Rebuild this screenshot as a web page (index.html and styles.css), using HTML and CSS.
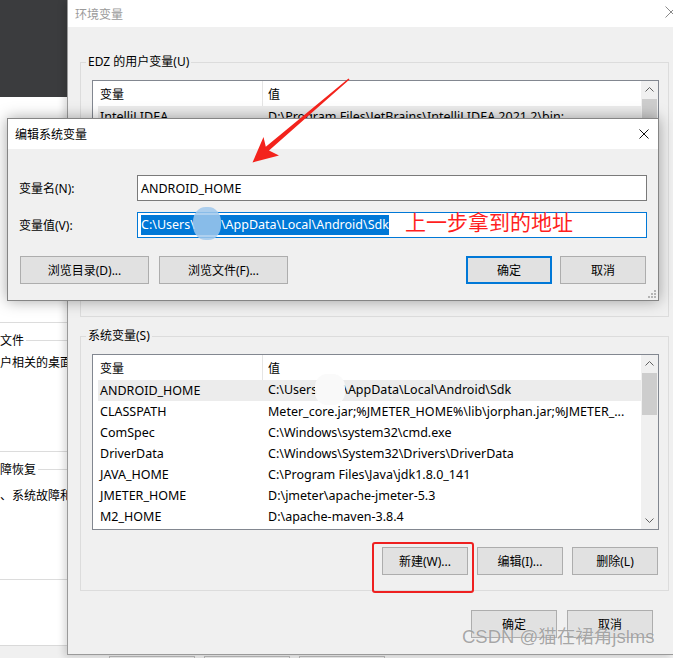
FILE: index.html
```html
<!DOCTYPE html>
<html lang="zh-CN">
<head>
  <meta charset="UTF-8" />
  <title>环境变量</title>
  <link rel="stylesheet" href="styles.css">
</head>
<body>
  <div class="desk">
    <div class="behind">
      <div class="behind-top"></div>
      <div class="behind-tab">
        <div class="perf"></div>
        <div class="old-group g-profile">
          <div class="old-legend"><span>文件</span></div>
          <div class="old-text">户相关的桌面</div>
        </div>
        <div class="old-group g-startup">
          <div class="old-legend"><span>障恢复</span></div>
          <div class="old-text">、系统故障和</div>
        </div>
      </div>
      <div class="behind-foot"></div>
    </div>

    <div class="right">
      <div class="envwin">
        <div class="titlebar">
          <span>环境变量</span>
          <svg width="12" height="12" viewBox="0 0 12 12"><path d="M0.5 0.5L11.5 11.5M11.5 0.5L0.5 11.5" stroke="#8a8a8a" stroke-width="1" fill="none"/></svg>
        </div>
        <div class="envbody">
          <fieldset class="group user-group">
            <legend>EDZ 的用户变量(U)</legend>
            <div class="list">
              <div class="list-main">
                <div class="list-head"><span class="c1">变量</span><span class="c2">值</span></div>
                <div class="row sel"><span class="c1">IntelliJ IDEA</span><span class="c2">D:\Program Files\JetBrains\IntelliJ IDEA 2021.2\bin;</span></div>
                <div class="row"><span class="c1">OneDrive</span><span class="c2">C:\Users\EDZ\OneDrive</span></div>
                <div class="row"><span class="c1">Path</span><span class="c2">C:\Users\EDZ\AppData\Local\Microsoft\WindowsApps;</span></div>
                <div class="row"><span class="c1">TEMP</span><span class="c2">C:\Users\EDZ\AppData\Local\Temp</span></div>
                <div class="row"><span class="c1">TMP</span><span class="c2">C:\Users\EDZ\AppData\Local\Temp</span></div>
              </div>
              <div class="scroll">
                <div class="arr"><svg width="9" height="5" viewBox="0 0 9 5"><polyline points="0.5,4.5 4.5,0.5 8.5,4.5" fill="none" stroke="#606060"/></svg></div>
                <div class="track"><div class="thumb"></div></div>
                <div class="arr"><svg width="9" height="5" viewBox="0 0 9 5"><polyline points="0.5,0.5 4.5,4.5 8.5,0.5" fill="none" stroke="#606060"/></svg></div>
              </div>
            </div>
            <div class="btns">
              <div class="btn">新建(N)...</div>
              <div class="btn">编辑(E)...</div>
              <div class="btn">删除(D)</div>
            </div>
          </fieldset>

          <fieldset class="group sys-group">
            <legend>系统变量(S)</legend>
            <div class="list">
              <div class="list-main">
                <div class="list-head"><span class="c1">变量</span><span class="c2">值</span></div>
                <div class="row sel"><span class="c1">ANDROID_HOME</span><span class="c2">C:\Users<span class="smudge"></span>\AppData\Local\Android\Sdk</span></div>
                <div class="row"><span class="c1">CLASSPATH</span><span class="c2">Meter_core.jar;%JMETER_HOME%\lib\jorphan.jar;%JMETER_...</span></div>
                <div class="row"><span class="c1">ComSpec</span><span class="c2">C:\Windows\system32\cmd.exe</span></div>
                <div class="row"><span class="c1">DriverData</span><span class="c2">C:\Windows\System32\Drivers\DriverData</span></div>
                <div class="row"><span class="c1">JAVA_HOME</span><span class="c2">C:\Program Files\Java\jdk1.8.0_141</span></div>
                <div class="row"><span class="c1">JMETER_HOME</span><span class="c2">D:\jmeter\apache-jmeter-5.3</span></div>
                <div class="row"><span class="c1">M2_HOME</span><span class="c2">D:\apache-maven-3.8.4</span></div>
              </div>
              <div class="scroll">
                <div class="arr"><svg width="9" height="5" viewBox="0 0 9 5"><polyline points="0.5,4.5 4.5,0.5 8.5,4.5" fill="none" stroke="#606060"/></svg></div>
                <div class="track"><div class="thumb"></div></div>
                <div class="arr"><svg width="9" height="5" viewBox="0 0 9 5"><polyline points="0.5,0.5 4.5,4.5 8.5,0.5" fill="none" stroke="#606060"/></svg></div>
              </div>
            </div>
            <div class="btns sys-btns">
              <div class="btn">新建(W)...</div>
              <div class="btn">编辑(I)...</div>
              <div class="btn">删除(L)</div>
            </div>
          </fieldset>

          <div class="btns main-btns">
            <div class="btn">确定</div>
            <div class="btn">取消</div>
          </div>
        </div>
      </div>
      <div class="under"><span></span><span></span><span></span></div>
    </div>
  </div>

  <div class="dialog">
    <div class="dlg-title">
      <span>编辑系统变量</span>
      <svg width="10" height="10" viewBox="0 0 10 10"><path d="M0.5 0.5L9.5 9.5M9.5 0.5L0.5 9.5" stroke="#111" stroke-width="1" fill="none"/></svg>
    </div>
    <div class="dlg-body">
      <div class="field">
        <label>变量名(N):</label>
        <div class="input">ANDROID_HOME</div>
      </div>
      <div class="field">
        <label>变量值(V):</label>
        <div class="input focus"><span class="selected">C:\Users\<span class="smudge"></span>\AppData\Local\Android\Sdk</span></div>
      </div>
      <div class="dlg-btns">
        <div class="btn wide">浏览目录(D)...</div>
        <div class="btn wide">浏览文件(F)...</div>
        <div class="spacer"></div>
        <div class="btn default">确定</div>
        <div class="btn">取消</div>
      </div>
      <svg class="grip" width="9" height="9" viewBox="0 0 9 9" fill="#b4b4b4">
        <rect x="7" y="1" width="2" height="2"/><rect x="4" y="4" width="2" height="2"/><rect x="7" y="4" width="2" height="2"/>
        <rect x="1" y="7" width="2" height="2"/><rect x="4" y="7" width="2" height="2"/><rect x="7" y="7" width="2" height="2"/>
      </svg>
    </div>
  </div>

  <!-- annotations drawn on top of the screenshot -->
  <div class="note">上一步拿到的地址</div>
  <svg class="arrow" width="673" height="658" viewBox="0 0 673 658">
    <polygon fill="#f3231c" points="349.5,79.6 269,150.6 279,155.5 252.5,162.5 263.5,137 265.8,146.8 348.5,78.4"/>
  </svg>
  <div class="mark-box"></div>
  <div class="watermark">CSDN @猫在裙角jslms</div>
</body>
</html>
```

FILE: styles.css
```css
* {
  box-sizing: border-box;
}
body {
  margin: 0;
  width: 673px;
  height: 658px;
  overflow: hidden;
  position: relative;
  font-family: "Segoe UI", "Noto Sans", "Noto Sans CJK SC", sans-serif;
  font-size: 12px;
  color: #000;
  background: #f0f0f0;
}
.desk {
  display: flex;
  height: 658px;
}

/* system properties window behind */
.behind {
  width: 67px;
  flex: none;
  display: flex;
  flex-direction: column;
  overflow: hidden;
  white-space: nowrap;
}
.behind-top {
  height: 97px;
  background: #3b3c3e;
}
.behind-tab {
  height: 549px;
  background: #fff;
  border-bottom: 1px solid #d9d9d9;
}
.perf {
  height: 226px;
  border-bottom: 1px solid #dcdcdc;
}
.old-group {
  border-bottom: 1px solid #dcdcdc;
}
.g-profile {
  height: 121px;
}
.g-startup {
  height: 120px;
}
.old-legend {
  display: flex;
  align-items: center;
  height: 18px;
  margin-top: 8px;
}
.old-legend::after {
  content: "";
  flex: 1;
  border-top: 1px solid #dcdcdc;
  margin-left: 2px;
}
.old-text {
  height: 18px;
  line-height: 18px;
}
.g-profile .old-text {
  margin-top: 5px;
}
.g-startup .old-text {
  margin-top: 9px;
}
.behind-foot {
  flex: 1;
  background: #f0f0f0;
}

/* environment variables window */
.right {
  flex: 1;
  min-width: 0;
  display: flex;
  flex-direction: column;
}
.envwin {
  height: 655px;
  display: flex;
  flex-direction: column;
  background: #f0f0f0;
  border-left: 1px solid #9a9a9a;
  border-bottom: 1px solid #9a9a9a;
  box-shadow: -3px 2px 7px rgba(0, 0, 0, 0.15);
}
.titlebar {
  height: 27px;
  flex: none;
  background: #fff;
  display: flex;
  align-items: center;
  justify-content: space-between;
  padding-left: 7px;
  color: #9a9a9a;
}
.titlebar svg {
  margin-right: -4px;
  margin-top: -3px;
}
.envbody {
  flex: 1;
  padding: 27px 4px 0 12px;
}
.group {
  margin: 0;
  min-width: 0;
  border: 1px solid #dcdcdc;
  padding: 10px 9px 15px 11px;
}
.group legend {
  margin-left: -6px;
  padding: 0 2px;
  line-height: 16px;
}
.sys-group {
  margin-top: 11px;
}

.list {
  display: flex;
  height: 176px;
  border: 1px solid #828790;
  background: #fff;
}
.list-main {
  flex: 1;
  min-width: 0;
  overflow: hidden;
}
.list-head {
  display: flex;
  height: 25px;
  align-items: center;
}
.list-head .c1 {
  width: 170px;
  height: 100%;
  display: flex;
  align-items: center;
  padding-left: 7px;
  border-right: 1px solid #e5e5e5;
}
.list-head .c2 {
  padding-left: 5px;
}
.row {
  display: flex;
  height: 21px;
  align-items: center;
  margin-left: 5px;
  white-space: nowrap;
  font-size: 12.5px;
}
.row.sel {
  background: #ececec;
}
.row .c1 {
  width: 164px;
  flex: none;
  padding-left: 2px;
}
.row .c2 {
  padding-left: 6px;
}
.row .smudge {
  display: inline-block;
  width: 26px;
  height: 21px;
  vertical-align: middle;
  position: relative;
}
.row .smudge::before {
  content: "";
  position: absolute;
  left: -2px;
  right: -2px;
  top: -6px;
  bottom: -4px;
  border-radius: 40%;
  background: rgba(250, 250, 250, 0.95);
}
.scroll {
  width: 17px;
  flex: none;
  background: #f0f0f0;
  display: flex;
  flex-direction: column;
}
.scroll .arr {
  height: 17px;
  display: flex;
  align-items: center;
  justify-content: center;
}
.scroll .track {
  flex: 1;
}
.scroll .thumb {
  width: 15px;
  height: 42px;
  margin: 1px 0 0 1px;
  background: #cdcdcd;
}

.btns {
  display: flex;
  justify-content: flex-end;
  gap: 9px;
  margin-top: 17px;
  padding-right: 1px;
}
.btn {
  width: 86px;
  height: 28px;
  background: #e1e1e1;
  border: 1px solid #adadad;
  display: flex;
  align-items: center;
  justify-content: center;
  white-space: nowrap;
}
.main-btns {
  gap: 10px;
  margin-top: 19px;
  padding-right: 16px;
}
.under {
  height: 3px;
  display: flex;
  gap: 9px;
  padding: 1px 0 0 42px;
}
.under span {
  width: 86px;
  border: 1px solid #adadad;
  border-bottom: none;
  background: #e1e1e1;
}

/* edit dialog */
.dialog {
  position: absolute;
  left: 7px;
  top: 118px;
  width: 652px;
  height: 183px;
  display: flex;
  flex-direction: column;
  background: #f0f0f0;
  border: 1px solid #858585;
  box-shadow: 0 0 14px rgba(0, 0, 0, 0.35);
}
.dlg-title {
  height: 30px;
  flex: none;
  background: #fff;
  display: flex;
  align-items: center;
  justify-content: space-between;
  padding: 0 9px 0 7px;
}
.dlg-body {
  flex: 1;
  display: flex;
  flex-direction: column;
  padding: 26px 11px 0 12px;
}
.field {
  display: flex;
  align-items: center;
}
.field + .field {
  margin-top: 11px;
}
.field label {
  width: 118px;
  flex: none;
  margin-left: -1px;
  padding-right: 1px;
}
.input {
  flex: 1;
  height: 26px;
  display: flex;
  align-items: center;
  padding-left: 3px;
  background: #fff;
  border: 1px solid #7a7a7a;
  white-space: nowrap;
  font-size: 12.5px;
}
.input.focus {
  border-color: #0078d7;
}
.selected {
  background: #0078d7;
  color: #fff;
  line-height: 20px;
}
.selected .smudge {
  display: inline-block;
  width: 26px;
  height: 20px;
  vertical-align: top;
  position: relative;
}
.selected .smudge::before {
  content: "";
  position: absolute;
  left: -2px;
  right: 0;
  top: -8px;
  bottom: -5px;
  border-radius: 45%;
  background: rgba(160, 200, 236, 0.85);
}
.dlg-btns {
  display: flex;
  gap: 8px;
  margin-top: 18px;
  padding-right: 1px;
}
.dlg-btns .wide {
  width: 129px;
}
.dlg-btns .wide + .wide {
  margin-left: 2px;
}
.dlg-btns .spacer {
  flex: 1;
}
.btn.default {
  border: 2px solid #0078d7;
}
.grip {
  align-self: flex-end;
  margin: 5px -9px 0 0;
}

/* annotations */
.note {
  position: absolute;
  left: 405px;
  top: 208px;
  font-family: "Noto Sans CJK SC", sans-serif;
  font-size: 21px;
  line-height: 26px;
  color: #ff1f1f;
}
.arrow {
  position: absolute;
  left: 0;
  top: 0;
}
.mark-box {
  position: absolute;
  left: 372px;
  top: 542px;
  width: 102px;
  height: 51px;
  border: 2px solid #ee2020;
  border-radius: 3px;
}
.watermark {
  position: absolute;
  left: 462px;
  top: 625px;
  font-family: "Liberation Sans", "Noto Sans CJK SC", sans-serif;
  font-size: 18.5px;
  line-height: 24px;
  color: rgba(110, 110, 110, 0.6);
  text-shadow: 0 0 1px rgba(255, 255, 255, 0.8);
  white-space: nowrap;
}
```
